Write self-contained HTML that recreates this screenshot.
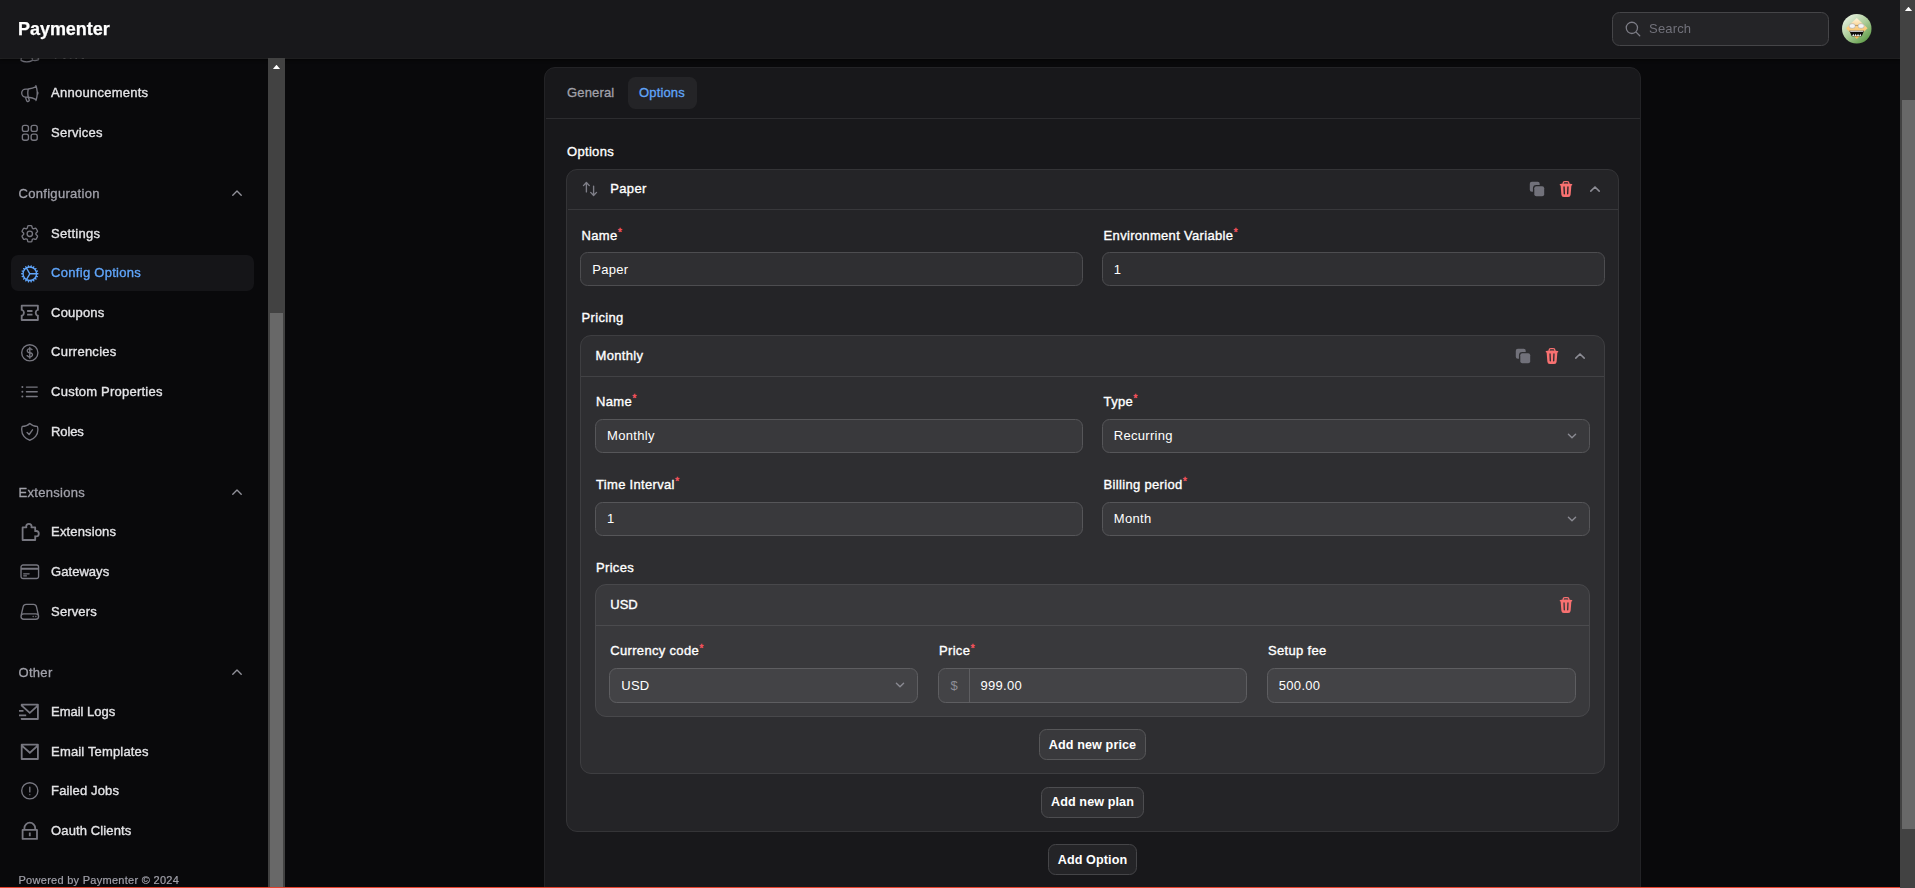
<!DOCTYPE html>
<html lang="en">
<head>
<meta charset="utf-8">
<title>Paymenter - Config Options</title>
<style>
*{box-sizing:border-box;margin:0;padding:0}
html,body{width:1915px;height:888px;overflow:hidden;background:#09090b}
body{position:relative;font-family:"Liberation Sans",Arial,sans-serif;font-size:13px;color:#fff;letter-spacing:.3px}
.abs{position:absolute}
svg{display:block}
/* ---------- topbar ---------- */
#topbar{position:absolute;left:0;top:0;width:1900px;height:58px;background:#18181b;z-index:20;box-shadow:0 1px 0 rgba(255,255,255,.1),0 2px 3px rgba(0,0,0,.55)}
#brand{will-change:transform;position:absolute;left:18.4px;top:18px;font-size:18px;line-height:22px;font-weight:700;letter-spacing:-.05px;color:#fff;-webkit-text-stroke:.25px #fff}
#search{position:absolute;left:1612px;top:12px;width:217px;height:34px;border-radius:7.5px;background:#242427;border:1px solid #454548}
#search svg{position:absolute;left:11px;top:6.9px;width:18px;height:18px}
#search span{position:absolute;left:36.1px;top:0;line-height:32px;color:#71717a;font-size:13px;letter-spacing:.15px}
#avatar{position:absolute;left:1842px;top:14px;width:29.5px;height:29.5px}
/* ---------- scrollbars ---------- */
.sbar{position:absolute;background:#424242}
.sbar i{position:absolute;background:#686868;display:block}
.sbar b{position:absolute;display:block;width:7.6px;height:4.6px;background:#fff;clip-path:polygon(50% 0,100% 100%,0 100%)}
#redline{position:absolute;left:0;top:887px;width:1900px;height:1px;background:#e5432d;z-index:30}
/* ---------- sidebar ---------- */
#sidebar{position:absolute;left:0;top:0;width:268px;height:888px;overflow:hidden;z-index:5;will-change:transform}
.nav{position:absolute;left:11px;width:243px;height:36px;border-radius:7.2px;display:flex;align-items:center;padding-left:7.2px}
.nav svg{width:21.6px;height:21.6px;flex:none;color:#777780;margin-right:10.8px;position:relative;left:.9px;top:.9px}
.nav span{position:relative;left:.5px;top:.6px;color:#e4e4e7;font-size:13px;line-height:20px;letter-spacing:.32px;-webkit-text-stroke:.35px #e4e4e7;white-space:nowrap}
.nav.on{background:#151518}
.nav.on svg{color:#60a5fa}
.nav.on span{color:#60a5fa;-webkit-text-stroke:.35px #60a5fa}
.grp{position:absolute;left:18.5px;height:36px;line-height:37.2px;color:#a1a1aa;font-size:13px;letter-spacing:.3px;-webkit-text-stroke:.3px #a1a1aa}
.gchev{position:absolute;left:228px;width:18px;height:18px;color:#92929b}
#foot{position:absolute;left:18.5px;top:872px;line-height:16px;font-size:11px;letter-spacing:.28px;color:#a1a1aa;-webkit-text-stroke:.2px #a1a1aa;white-space:nowrap}

/* ---------- main ---------- */
#main{position:absolute;left:0;top:0;width:1900px;height:888px;overflow:hidden;z-index:1}
.card{position:absolute;border-radius:11px}
.hr{position:absolute;height:1px}
.lbl{position:absolute;line-height:20px;white-space:nowrap;color:#fff;font-size:13px;letter-spacing:.32px;-webkit-text-stroke:.35px #fff}
.lbl sup{color:#f4525c;-webkit-text-stroke:.4px #f4525c;font-size:10px;line-height:0;position:relative;top:1.5px;left:.5px;letter-spacing:0;vertical-align:super}
.inp{position:absolute;height:34px;border-radius:7.5px;border:1px solid;line-height:32px;padding-left:10.8px;white-space:nowrap;color:#fff;font-size:13px;letter-spacing:.3px}
.l1{background:#2f2f32;border-color:#4d4d50}
.l2{background:#39393c;border-color:#565659}
.l3{background:#434346;border-color:#5e5e61}
.inp svg.cd{position:absolute;right:8px;top:7px;width:18px;height:18px}
.ic{position:absolute;width:18px;height:18px}
.btn{position:absolute;padding-top:.9px;height:31px;border-radius:7.5px;border:1px solid;line-height:29px;text-align:center;font-weight:700;font-size:12.6px;letter-spacing:.1px;color:#fff;white-space:nowrap}
</style>
</head>
<body>
<!-- TOPBAR -->
<div id="topbar">
  <div id="brand">Paymenter</div>
  <div id="search">
    <svg viewBox="0 0 24 24" fill="none" stroke="#7d7d86" stroke-width="1.7" stroke-linecap="round" stroke-linejoin="round"><path d="m21 21-5.197-5.197m0 0A7.5 7.5 0 1 0 5.196 5.196a7.5 7.5 0 0 0 10.607 10.607Z"/></svg>
    <span>Search</span>
  </div>
  <svg id="avatar" viewBox="0 0 30 30">
    <defs>
      <linearGradient id="avg" x1="0.15" y1="0.1" x2="0.85" y2="0.95"><stop offset="0" stop-color="#e6f0de"/><stop offset=".5" stop-color="#a9cb96"/><stop offset="1" stop-color="#5c9a45"/></linearGradient>
      <linearGradient id="avd" x1="0.5" y1="0" x2="0.5" y2="1"><stop offset="0" stop-color="#fff5e0"/><stop offset=".45" stop-color="#fbcf83"/><stop offset="1" stop-color="#f5b556"/></linearGradient>
    </defs>
    <circle cx="15" cy="15" r="15" fill="url(#avg)"/>
    <path d="M15 4 26 14.5 15 25.5 4 14.5Z" fill="url(#avd)"/>
    <ellipse cx="10.4" cy="12.2" rx="3.2" ry="2.4" fill="#f4f4f4" stroke="#999" stroke-width=".5"/>
    <ellipse cx="19.4" cy="12.2" rx="3.2" ry="2.4" fill="#f4f4f4" stroke="#999" stroke-width=".5"/>
    <path d="M13.4 11.6h3" stroke="#8a6a3a" stroke-width=".6"/>
    <path d="M7.5 17h15l-2.5 5.5h-10Z" fill="#0a0a0a"/>
    <path d="M8.3 17h13.4v1.1H8.3Z" fill="#eee"/>
    <path d="M10.3 22.4l1.2-2.3 1.2 2.3 1.2-2.3 1.2 2.3 1.2-2.3 1.2 2.3 1.2-2.3 1.1 2.3Z" fill="#f2f2f2"/>
  </svg>
</div>

<!-- SCROLLBARS -->
<div class="sbar" style="left:268px;top:58px;width:17px;height:830px;z-index:21"><b style="left:4.7px;top:6.7px"></b><i style="left:2px;top:255px;width:13px;height:575px"></i></div>
<div class="sbar" style="left:1900px;top:0;width:15px;height:888px;z-index:25"><b style="left:4.7px;top:6.7px"></b><i style="left:2px;top:99.5px;width:13px;height:729px"></i></div>
<div id="redline"></div>

<!-- SIDEBAR -->
<div id="sidebar">
<div class="nav" style="top:35.0px"><svg viewBox="0 0 24 24" fill="none" stroke="currentColor" stroke-width="1.5" stroke-linecap="round" stroke-linejoin="round"><path d="M15 19.128a9.38 9.38 0 0 0 2.625.372 9.337 9.337 0 0 0 4.121-.952 4.125 4.125 0 0 0-7.533-2.493M15 19.128v-.003c0-1.113-.285-2.16-.786-3.07M15 19.128v.106A12.318 12.318 0 0 1 8.624 21c-2.331 0-4.512-.645-6.374-1.766l-.001-.109a6.375 6.375 0 0 1 11.964-3.07M12 6.375a3.375 3.375 0 1 1-6.75 0 3.375 3.375 0 0 1 6.75 0Zm8.25 2.25a2.625 2.625 0 1 1-5.25 0 2.625 2.625 0 0 1 5.25 0Z"/></svg><span style="top:1.1px;letter-spacing:.2px">Users</span></div>
<div class="nav" style="top:74.6px"><svg viewBox="0 0 24 24" fill="none" stroke="currentColor" stroke-width="1.5" stroke-linecap="round" stroke-linejoin="round"><path d="M10.34 15.84c-.688-.06-1.386-.09-2.09-.09H7.5a4.5 4.5 0 1 1 0-9h.75c.704 0 1.402-.03 2.09-.09m0 9.18c.253.962.584 1.892.985 2.783.247.55.06 1.21-.463 1.511l-.657.38c-.551.318-1.26.117-1.527-.461a20.845 20.845 0 0 1-1.44-4.282m3.102.069a18.03 18.03 0 0 1-.59-4.59c0-1.586.205-3.124.59-4.59m0 9.18a23.848 23.848 0 0 1 8.835 2.535M10.34 6.66a23.847 23.847 0 0 0 8.835-2.535m0 0A23.74 23.74 0 0 0 18.795 3m.38 1.125a23.91 23.91 0 0 1 1.014 5.395m-1.014 8.855c-.118.38-.245.754-.38 1.125m.38-1.125a23.91 23.91 0 0 0 1.014-5.395m0-3.46c.495.413.811 1.035.811 1.73 0 .695-.316 1.317-.811 1.73m0-3.46a24.347 24.347 0 0 1 0 3.46"/></svg><span style="letter-spacing:0.25px">Announcements</span></div>
<div class="nav" style="top:114.2px"><svg viewBox="0 0 24 24" fill="none" stroke="currentColor" stroke-width="1.5" stroke-linecap="round" stroke-linejoin="round"><path d="M3.75 6A2.25 2.25 0 0 1 6 3.75h2.25A2.25 2.25 0 0 1 10.5 6v2.25a2.25 2.25 0 0 1-2.25 2.25H6a2.25 2.25 0 0 1-2.25-2.25V6ZM3.75 15.75A2.25 2.25 0 0 1 6 13.5h2.25a2.25 2.25 0 0 1 2.25 2.25V18a2.25 2.25 0 0 1-2.25 2.25H6A2.25 2.25 0 0 1 3.75 18v-2.25ZM13.5 6a2.25 2.25 0 0 1 2.25-2.25H18A2.25 2.25 0 0 1 20.25 6v2.25A2.25 2.25 0 0 1 18 10.5h-2.25a2.25 2.25 0 0 1-2.25-2.25V6ZM13.5 15.75a2.25 2.25 0 0 1 2.25-2.25H18a2.25 2.25 0 0 1 2.25 2.25V18A2.25 2.25 0 0 1 18 20.25h-2.25A2.25 2.25 0 0 1 13.5 18v-2.25Z"/></svg><span style="letter-spacing:0.23px">Services</span></div>
<div class="grp" style="top:175.4px">Configuration</div><svg class="gchev" style="top:184.1px" viewBox="0 0 20 20" fill="none" stroke="currentColor" stroke-width="1.5" stroke-linecap="round" stroke-linejoin="round"><path d="M5.3 12.4 10 7.700l4.7 4.700"/></svg>
<div class="nav" style="top:215.0px"><svg viewBox="0 0 24 24" fill="none" stroke="currentColor" stroke-width="1.5" stroke-linecap="round" stroke-linejoin="round"><path d="M9.594 3.94c.09-.542.56-.94 1.11-.94h2.593c.55 0 1.02.398 1.11.94l.213 1.281c.063.374.313.686.645.87.074.04.147.083.22.127.325.196.72.257 1.075.124l1.217-.456a1.125 1.125 0 0 1 1.37.49l1.296 2.247a1.125 1.125 0 0 1-.26 1.431l-1.003.827c-.293.241-.438.613-.43.992a7.723 7.723 0 0 1 0 .255c-.008.378.137.75.43.991l1.004.827c.424.35.534.955.26 1.43l-1.298 2.247a1.125 1.125 0 0 1-1.369.491l-1.217-.456c-.355-.133-.75-.072-1.076.124a6.47 6.47 0 0 1-.22.128c-.331.183-.581.495-.644.869l-.213 1.281c-.09.543-.56.94-1.11.94h-2.594c-.55 0-1.019-.398-1.11-.94l-.213-1.281c-.062-.374-.312-.686-.644-.87a6.52 6.52 0 0 1-.22-.127c-.325-.196-.72-.257-1.076-.124l-1.217.456a1.125 1.125 0 0 1-1.369-.49l-1.297-2.247a1.125 1.125 0 0 1 .26-1.431l1.004-.827c.292-.24.437-.613.43-.991a6.932 6.932 0 0 1 0-.255c.007-.38-.138-.751-.43-.992l-1.004-.827a1.125 1.125 0 0 1-.26-1.43l1.297-2.247a1.125 1.125 0 0 1 1.37-.491l1.216.456c.356.133.751.072 1.076-.124.072-.044.146-.086.22-.128.332-.183.582-.495.644-.869l.214-1.28ZM15 12a3 3 0 1 1-6 0 3 3 0 0 1 6 0Z"/></svg><span style="letter-spacing:0.28px">Settings</span></div>
<div class="nav on" style="top:254.6px"><svg viewBox="0 0 24 24" fill="none" stroke="currentColor" stroke-width="1.5" stroke-linecap="round" stroke-linejoin="round"><path d="M4.5 12a7.5 7.5 0 0 0 15 0m-15 0a7.5 7.5 0 1 1 15 0m-15 0H3m16.5 0H21m-1.5 0H12m-8.457 3.077 1.41-.513m14.095-5.13 1.41-.513M5.106 17.785l1.15-.964m11.49-9.642 1.149-.964M7.501 19.795l.75-1.3m7.5-12.99.75-1.3m-6.063 16.658.26-1.477m2.605-14.772.26-1.477m0 17.726-.26-1.477M10.698 4.614l-.26-1.477M16.5 19.794l-.75-1.299M7.5 4.205 12 12m6.894 5.785-1.149-.964M6.256 7.178l-1.15-.964m15.352 8.864-1.41-.513M4.954 9.435l-1.41-.514M12.002 12l-3.75 6.495"/></svg><span style="letter-spacing:0.29px">Config Options</span></div>
<div class="nav" style="top:294.2px"><svg viewBox="0 0 24 24" fill="currentColor"><path d="M2 4a1 1 0 0 1 1-1h18a1 1 0 0 1 1 1v5.5a2.5 2.5 0 1 0 0 5V20a1 1 0 0 1-1 1H3a1 1 0 0 1-1-1v-5.5a2.5 2.5 0 1 0 0-5V4Zm2 1v2.968a4.5 4.5 0 0 1 0 8.064V19h16v-2.968a4.5 4.5 0 0 1 0-8.064V5H4Zm5 4h6v2H9V9Zm0 4h6v2H9v-2Z"/></svg><span style="letter-spacing:0.18px">Coupons</span></div>
<div class="nav" style="top:333.8px"><svg viewBox="0 0 24 24" fill="none" stroke="currentColor" stroke-width="1.5" stroke-linecap="round" stroke-linejoin="round"><path d="M12 6v12m-3-2.818.879.659c1.171.879 3.07.879 4.242 0 1.172-.879 1.172-2.303 0-3.182C13.536 12.219 12.768 12 12 12c-.725 0-1.45-.22-2.003-.659-1.106-.879-1.106-2.303 0-3.182s2.9-.879 4.006 0l.415.33M21 12a9 9 0 1 1-18 0 9 9 0 0 1 18 0Z"/></svg><span style="letter-spacing:0.26px">Currencies</span></div>
<div class="nav" style="top:373.4px"><svg viewBox="0 0 24 24" fill="none" stroke="currentColor" stroke-width="1.5" stroke-linecap="round" stroke-linejoin="round"><path d="M8.25 6.75h12M8.25 12h12m-12 5.25h12M3.75 6.75h.007v.008H3.75V6.75Zm.375 0a.375.375 0 1 1-.75 0 .375.375 0 0 1 .75 0ZM3.75 12h.007v.008H3.75V12Zm.375 0a.375.375 0 1 1-.75 0 .375.375 0 0 1 .75 0Zm-.375 5.25h.007v.008H3.75v-.008Zm.375 0a.375.375 0 1 1-.75 0 .375.375 0 0 1 .75 0Z"/></svg><span style="letter-spacing:0.23px">Custom Properties</span></div>
<div class="nav" style="top:413.0px"><svg viewBox="0 0 24 24" fill="none" stroke="currentColor" stroke-width="1.5" stroke-linecap="round" stroke-linejoin="round"><path d="M9 12.75 11.25 15 15 9.75m-3-7.036A11.959 11.959 0 0 1 3.598 6 11.99 11.99 0 0 0 3 9.749c0 5.592 3.824 10.29 9 11.623 5.176-1.332 9-6.03 9-11.622 0-1.31-.21-2.571-.598-3.751h-.152c-3.196 0-6.1-1.248-8.25-3.285Z"/></svg><span style="letter-spacing:-0.12px">Roles</span></div>
<div class="grp" style="top:474.2px">Extensions</div><svg class="gchev" style="top:482.9px" viewBox="0 0 20 20" fill="none" stroke="currentColor" stroke-width="1.5" stroke-linecap="round" stroke-linejoin="round"><path d="M5.3 12.4 10 7.700l4.7 4.700"/></svg>
<div class="nav" style="top:513.8px"><svg viewBox="0 0 24 24" fill="currentColor"><path d="M7 5a4 4 0 0 1 8 0h3a1 1 0 0 1 1 1v3a4 4 0 0 1 0 8v3a1 1 0 0 1-1 1H4a1 1 0 0 1-1-1V6a1 1 0 0 1 1-1h3Zm4-2a2 2 0 0 0-1.886 2.667A1 1 0 0 1 8.17 7H5v12h12v-3.17a1 1 0 0 1 1.333-.944A2 2 0 1 0 19 11c-.236 0-.46.04-.667.114A1 1 0 0 1 17 10.17V7h-3.17a1 1 0 0 1-.944-1.333A2 2 0 0 0 11 3Z"/></svg><span style="letter-spacing:0.14px">Extensions</span></div>
<div class="nav" style="top:553.4px"><svg viewBox="0 0 24 24" fill="none" stroke="currentColor" stroke-width="1.5" stroke-linecap="round" stroke-linejoin="round"><path d="M2.25 8.25h19.5M2.25 9h19.5m-16.5 5.25h6m-6 2.25h3m-3.75 3h15a2.25 2.25 0 0 0 2.25-2.25V6.75A2.25 2.25 0 0 0 19.5 4.5h-15a2.25 2.25 0 0 0-2.25 2.25v10.5A2.25 2.25 0 0 0 4.5 19.5Z"/></svg><span style="letter-spacing:0.04px">Gateways</span></div>
<div class="nav" style="top:593.0px"><svg viewBox="0 0 24 24" fill="none" stroke="currentColor" stroke-width="1.5" stroke-linecap="round" stroke-linejoin="round"><path d="M21.75 17.25v-.228a4.5 4.5 0 0 0-.12-1.03l-2.268-9.64a3.375 3.375 0 0 0-3.285-2.602H7.923a3.375 3.375 0 0 0-3.285 2.602l-2.268 9.64a4.5 4.5 0 0 0-.12 1.03v.228m19.5 0a3 3 0 0 1-3 3H5.25a3 3 0 0 1-3-3m19.5 0a3 3 0 0 0-3-3H5.25a3 3 0 0 0-3 3m16.5 0h.008v.008h-.008v-.008Zm-3 0h.008v.008h-.008v-.008Z"/></svg><span style="letter-spacing:0.14px">Servers</span></div>
<div class="grp" style="top:654.2px">Other</div><svg class="gchev" style="top:662.9px" viewBox="0 0 20 20" fill="none" stroke="currentColor" stroke-width="1.5" stroke-linecap="round" stroke-linejoin="round"><path d="M5.3 12.4 10 7.700l4.7 4.700"/></svg>
<div class="nav" style="top:693.8px"><svg viewBox="0 0 24 24" fill="currentColor" style="top:-0.1px"><path d="M22 20.007a1 1 0 0 1-.992.993H2.992A.993.993 0 0 1 2 20.007V19h18V7.3l-8 7.2-10-9V4a1 1 0 0 1 1-1h18a1 1 0 0 1 1 1v16.007ZM4.434 5 12 11.81 19.566 5H4.434ZM0 15h8v2H0v-2Zm0-5h5v2H0v-2Z"/></svg><span style="letter-spacing:-0.02px">Email Logs</span></div>
<div class="nav" style="top:733.4px"><svg viewBox="0 0 24 24" fill="currentColor"><path d="M3 3h18a1 1 0 0 1 1 1v16a1 1 0 0 1-1 1H3a1 1 0 0 1-1-1V4a1 1 0 0 1 1-1Zm17 4.238-7.928 7.1L4 7.216V19h16V7.238ZM4.511 5l7.55 6.662L19.502 5H4.511Z"/></svg><span style="letter-spacing:0.16px">Email Templates</span></div>
<div class="nav" style="top:773.0px"><svg viewBox="0 0 24 24" fill="none" stroke="currentColor" stroke-width="1.5" stroke-linecap="round" stroke-linejoin="round" style="top:-0.1px"><path d="M12 8v5.200m9-1.200a9 9 0 1 1-18 0 9 9 0 0 1 18 0Zm-9 4.300h.008v.008H12v-.008Z"/></svg><span style="letter-spacing:0.14px;top:-0.4px">Failed Jobs</span></div>
<div class="nav" style="top:812.6px"><svg viewBox="0 0 24 24" fill="currentColor" style="top:-0.1px"><path d="M19 10h1a1 1 0 0 1 1 1v10a1 1 0 0 1-1 1H4a1 1 0 0 1-1-1V11a1 1 0 0 1 1-1h1V9a7 7 0 1 1 14 0v1ZM5 12v8h14v-8H5Zm6 2h2v4h-2v-4Zm6-4V9A5 5 0 0 0 7 9v1h10Z"/></svg><span style="letter-spacing:0.12px">Oauth Clients</span></div>
<div id="foot">Powered by Paymenter © 2024</div>
</div>

<!-- MAIN -->
<div id="main">
<div class="card" style="left:544px;top:67px;width:1097px;height:860px;background:#18181b;border:1px solid #232326"></div>
<div class="lbl" style="left:567px;top:82.5px;color:#a1a1aa;-webkit-text-stroke:.3px #a1a1aa;letter-spacing:.15px">General</div>
<div class="abs" style="left:628px;top:77px;width:69px;height:32px;border-radius:7.5px;background:#242427"></div>
<div class="lbl" style="left:639px;top:82.5px;color:#60a5fa;-webkit-text-stroke:.3px #60a5fa;letter-spacing:.15px">Options</div>
<div class="hr" style="left:545.5px;top:118px;width:1094.5px;background:#2c2c2f"></div>
<div class="lbl" style="left:567px;top:141.5px">Options</div>
<div class="card" style="left:566px;top:169px;width:1052.5px;height:662.5px;background:#242427;border:1px solid #343437"></div>
<div class="hr" style="left:567.5px;top:209px;width:1050px;background:#38383b"></div>
<svg class="ic" style="left:580.9px;top:180.0px" viewBox="0 0 20 20" fill="#7f7f88"><path d="M2.24 6.8a.75.75 0 0 0 1.060-.040l1.950-2.100v8.590a.75.75 0 0 0 1.500 0V4.660l1.950 2.100a.75.75 0 1 0 1.100-1.020l-3.250-3.500a.75.75 0 0 0-1.100 0L2.200 5.740a.75.75 0 0 0 .040 1.060Zm8 6.400a.75.75 0 0 0-.040 1.060l3.250 3.500a.75.75 0 0 0 1.100 0l3.250-3.500a.75.75 0 1 0-1.100-1.020l-1.950 2.100V6.750a.75.75 0 0 0-1.500 0v8.590l-1.950-2.100a.75.75 0 0 0-1.060-.040Z"/></svg>
<div class="lbl" style="left:610.3px;top:179.0px">Paper</div>
<svg class="ic" style="left:1528.0px;top:180.0px" viewBox="0 0 20 20" fill="#71717a"><path d="M2 4.25A2.25 2.25 0 0 1 4.25 2h6.5A2.25 2.25 0 0 1 13 4.25V5.5H9.25A3.75 3.75 0 0 0 5.500 9.25V13H4.25A2.25 2.25 0 0 1 2 10.75v-6.5Z"/><path d="M9.25 7A2.25 2.25 0 0 0 7 9.25v6.5A2.25 2.25 0 0 0 9.25 18h6.5A2.25 2.25 0 0 0 18 15.75v-6.5A2.25 2.25 0 0 0 15.75 7h-6.5Z"/></svg>
<svg class="ic" style="left:1557.0px;top:180.0px" viewBox="0 0 20 20" fill="#f87171"><path fill-rule="evenodd" clip-rule="evenodd" d="M8.75 1A2.75 2.75 0 0 0 6 3.75v.443c-.795.077-1.584.176-2.365.298a.75.75 0 1 0 .23 1.482l.149-.022.841 10.518A2.75 2.75 0 0 0 7.596 19h4.807a2.750 2.750 0 0 0 2.742-2.530l.841-10.520.149.023a.75.75 0 0 0 .23-1.482A41.030 41.030 0 0 0 14 4.193V3.75A2.75 2.75 0 0 0 11.25 1h-2.500ZM10 4c.84 0 1.673.025 2.500.075V3.750c0-.690-.560-1.250-1.250-1.250h-2.500c-.690 0-1.250.560-1.250 1.250v.325C8.327 4.025 9.160 4 10 4ZM8.580 7.720a.75.75 0 0 0-1.500.060l.3 7.500a.75.75 0 1 0 1.500-.060l-.3-7.500Zm4.340.060a.75.75 0 1 0-1.500-.060l-.3 7.500a.75.75 0 1 0 1.500.060l.3-7.500Z"/></svg>
<svg class="ic" style="left:1586.0px;top:179.5px" viewBox="0 0 20 20" fill="none" stroke="#8d8d95" stroke-width="1.7" stroke-linecap="round" stroke-linejoin="round"><path d="M5.3 12.4 10 7.7l4.700 4.700"/></svg>
<div class="lbl" style="left:581.6px;top:225.6px">Name<sup>*</sup></div>
<div class="lbl" style="left:1103.6px;top:225.6px">Environment Variable<sup>*</sup></div>
<div class="inp l1" style="line-height:34px;left:580.4px;top:252px;width:502.4px">Paper</div>
<div class="inp l1" style="line-height:34px;left:1102px;top:252px;width:503.0px">1</div>
<div class="lbl" style="left:581.6px;top:308.3px">Pricing</div>
<div class="card" style="left:580px;top:335px;width:1024.5px;height:438.6px;background:#2e2e31;border:1px solid #3e3e41"></div>
<div class="hr" style="left:581px;top:376px;width:1022.5px;background:#424245"></div>
<div class="lbl" style="left:595.6px;top:345.6px">Monthly</div>
<svg class="ic" style="left:1514.3px;top:347.0px" viewBox="0 0 20 20" fill="#71717a"><path d="M2 4.25A2.25 2.25 0 0 1 4.25 2h6.5A2.25 2.25 0 0 1 13 4.25V5.5H9.25A3.75 3.75 0 0 0 5.500 9.25V13H4.25A2.25 2.25 0 0 1 2 10.75v-6.5Z"/><path d="M9.25 7A2.25 2.25 0 0 0 7 9.25v6.5A2.25 2.25 0 0 0 9.25 18h6.5A2.25 2.25 0 0 0 18 15.75v-6.5A2.25 2.25 0 0 0 15.75 7h-6.5Z"/></svg>
<svg class="ic" style="left:1543.0px;top:347.0px" viewBox="0 0 20 20" fill="#f87171"><path fill-rule="evenodd" clip-rule="evenodd" d="M8.75 1A2.75 2.75 0 0 0 6 3.75v.443c-.795.077-1.584.176-2.365.298a.75.75 0 1 0 .23 1.482l.149-.022.841 10.518A2.75 2.75 0 0 0 7.596 19h4.807a2.750 2.750 0 0 0 2.742-2.530l.841-10.520.149.023a.75.75 0 0 0 .23-1.482A41.030 41.030 0 0 0 14 4.193V3.75A2.75 2.75 0 0 0 11.25 1h-2.500ZM10 4c.84 0 1.673.025 2.500.075V3.750c0-.690-.560-1.250-1.250-1.250h-2.500c-.690 0-1.250.560-1.250 1.250v.325C8.327 4.025 9.160 4 10 4ZM8.580 7.720a.75.75 0 0 0-1.500.060l.3 7.500a.75.75 0 1 0 1.500-.060l-.3-7.500Zm4.340.060a.75.75 0 1 0-1.500-.060l-.3 7.500a.75.75 0 1 0 1.500.060l.3-7.500Z"/></svg>
<svg class="ic" style="left:1571.0px;top:346.5px" viewBox="0 0 20 20" fill="none" stroke="#8d8d95" stroke-width="1.7" stroke-linecap="round" stroke-linejoin="round"><path d="M5.3 12.4 10 7.7l4.700 4.700"/></svg>
<div class="lbl" style="left:596px;top:391.8px">Name<sup>*</sup></div>
<div class="lbl" style="left:1103.6px;top:391.8px">Type<sup>*</sup></div>
<div class="inp l2" style="left:595.3px;top:419px;width:487.7px">Monthly</div>
<div class="inp l2" style="left:1102px;top:419px;width:488.0px">Recurring<svg class="cd" viewBox="0 0 20 20" fill="none" stroke="#8b8b93" stroke-width="1.5" stroke-linecap="round" stroke-linejoin="round"><path d="m6 8 4 4 4-4"/></svg></div>
<div class="lbl" style="left:596px;top:475px">Time Interval<sup>*</sup></div>
<div class="lbl" style="left:1103.6px;top:475px">Billing period<sup>*</sup></div>
<div class="inp l2" style="left:595.3px;top:502px;width:487.7px">1</div>
<div class="inp l2" style="left:1102px;top:502px;width:488.0px">Month<svg class="cd" viewBox="0 0 20 20" fill="none" stroke="#8b8b93" stroke-width="1.5" stroke-linecap="round" stroke-linejoin="round"><path d="m6 8 4 4 4-4"/></svg></div>
<div class="lbl" style="left:596px;top:557.6px">Prices</div>
<div class="card" style="left:595px;top:584px;width:995px;height:133px;background:#39393c;border:1px solid #48484b"></div>
<div class="hr" style="left:596px;top:625px;width:993px;background:#4b4b4e"></div>
<div class="lbl" style="left:610.3px;top:595.2px;letter-spacing:0">USD</div>
<svg class="ic" style="left:1556.7px;top:595.8px" viewBox="0 0 20 20" fill="#f87171"><path fill-rule="evenodd" clip-rule="evenodd" d="M8.75 1A2.75 2.75 0 0 0 6 3.75v.443c-.795.077-1.584.176-2.365.298a.75.75 0 1 0 .23 1.482l.149-.022.841 10.518A2.75 2.75 0 0 0 7.596 19h4.807a2.750 2.750 0 0 0 2.742-2.530l.841-10.520.149.023a.75.75 0 0 0 .23-1.482A41.030 41.030 0 0 0 14 4.193V3.75A2.75 2.75 0 0 0 11.25 1h-2.500ZM10 4c.84 0 1.673.025 2.500.075V3.750c0-.690-.560-1.250-1.250-1.250h-2.500c-.690 0-1.250.560-1.250 1.250v.325C8.327 4.025 9.160 4 10 4ZM8.580 7.720a.75.75 0 0 0-1.500.060l.3 7.500a.75.75 0 1 0 1.500-.060l-.3-7.500Zm4.340.060a.75.75 0 1 0-1.500-.060l-.3 7.500a.75.75 0 1 0 1.500.060l.3-7.500Z"/></svg>
<div class="lbl" style="left:610.3px;top:641.4px">Currency code<sup>*</sup></div>
<div class="lbl" style="left:939px;top:641.4px">Price<sup>*</sup></div>
<div class="lbl" style="left:1268px;top:641.4px">Setup fee</div>
<div class="inp l3" style="height:35px;line-height:33.6px;left:609.4px;top:668px;width:308.4px">USD<svg class="cd" viewBox="0 0 20 20" fill="none" stroke="#8b8b93" stroke-width="1.5" stroke-linecap="round" stroke-linejoin="round"><path d="m6 8 4 4 4-4"/></svg></div>
<div class="inp l3" style="height:35px;line-height:33.6px;left:938px;top:668px;width:309.0px;padding-left:41.5px">999.00</div>
<div class="abs" style="left:969px;top:669px;width:1px;height:33px;background:#5e5e61"></div>
<div class="abs" style="left:939px;top:669px;width:30px;height:33px;line-height:33px;text-align:center;color:#8d8d95;font-size:13px;letter-spacing:0">$</div>
<div class="inp l3" style="height:35px;line-height:33.6px;left:1267px;top:668px;width:309.0px">500.00</div>
<div class="btn" style="left:1039px;top:729.2px;width:107.0px;height:30.8px;line-height:28.8px;background:#39393c;border-color:#575759">Add new price</div>
<div class="btn" style="left:1041.2px;top:787.2px;width:102.6px;height:30.6px;line-height:27.6px;background:#2f2f32;border-color:#4d4d50">Add new plan</div>
<div class="btn" style="left:1048.3px;top:844.2px;width:88.4px;height:30.6px;line-height:28.6px;background:#242427;border-color:#454548">Add Option</div>
</div>
</body>
</html>
